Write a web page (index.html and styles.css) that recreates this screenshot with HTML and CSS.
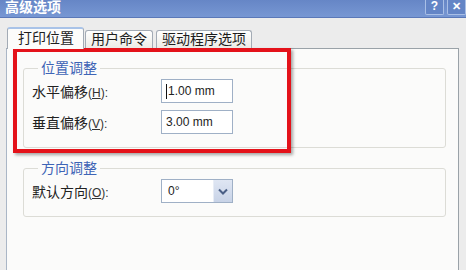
FILE: index.html
```html
<!DOCTYPE html>
<html lang="zh-CN">
<head>
  <meta charset="UTF-8">
  <title>高级选项</title>
  <link rel="stylesheet" href="styles.css">
</head>
<body>
  <div class="dialog">
    <div class="titlebar">
      <span class="title">高级选项</span>
      <div class="caption-btns">
        <span class="cbtn">?</span>
        <span class="cbtn close">✕</span>
      </div>
    </div>

    <div class="client">
      <div class="tabs">
        <div class="tab active">打印位置</div>
        <div class="tab">用户命令</div>
        <div class="tab wide">驱动程序选项</div>
      </div>

      <div class="panel">
        <fieldset class="group">
          <legend>位置调整</legend>
          <div class="row">
            <label>水平偏移<span class="key">(<u>H</u>):</span></label>
            <div class="field"><span class="caret"></span>1.00 mm</div>
          </div>
          <div class="row">
            <label>垂直偏移<span class="key">(<u>V</u>):</span></label>
            <div class="field">3.00 mm</div>
          </div>
        </fieldset>

        <fieldset class="group">
          <legend>方向调整</legend>
          <div class="row">
            <label>默认方向<span class="key">(<u>O</u>):</span></label>
            <div class="field combo">
              <span class="value">0°</span>
              <span class="drop">
                <svg width="10" height="7" viewBox="0 0 10 7"><path d="M1 1.5 L5 5.5 L9 1.5" fill="none" stroke="#4a5f86" stroke-width="2"/></svg>
              </span>
            </div>
          </div>
        </fieldset>
      </div>

      <div class="highlight"></div>
    </div>
  </div>
</body>
</html>
```

FILE: styles.css
```css
* {
  margin: 0;
  padding: 0;
  box-sizing: border-box;
}

body {
  width: 466px;
  height: 270px;
  overflow: hidden;
  background: #ececec;
  font-family: "Liberation Sans", "Noto Sans CJK SC", sans-serif;
  color: #1e1e1e;
}

.titlebar {
  height: 18px;
  display: flex;
  justify-content: space-between;
  background: linear-gradient(#6686c6, #7797d3);
  border-bottom: 1px solid #5a78b8;
}

.title {
  margin: -1px 0 0 5px;
  font-size: 14px;
  line-height: 16px;
  font-weight: bold;
  color: #fff;
}

.caption-btns {
  display: flex;
  gap: 3px;
}

.cbtn {
  width: 19px;
  height: 16px;
  margin-top: -1px;
  border: 1px solid #a9bfe6;
  border-top: none;
  border-radius: 0 0 2px 2px;
  background: #6485c6;
  color: #fff;
  font-size: 12px;
  font-weight: bold;
  line-height: 15px;
  text-align: center;
}

.cbtn.close {
  font-size: 11px;
}

.client {
  position: relative;
  padding: 9px 0 0 6px;
}

.tabs {
  display: flex;
  align-items: flex-end;
  padding-left: 1px;
  gap: 1px;
  position: relative;
  z-index: 1;
}

.tab {
  height: 18px;
  padding: 0 5px;
  border: 1px solid #a3abb5;
  border-bottom: none;
  border-radius: 3px 3px 0 0;
  background: linear-gradient(#ffffff, #ecebe6);
  font-size: 14px;
  line-height: 17px;
  white-space: nowrap;
}

.tab.active {
  height: 22px;
  margin-bottom: -1px;
  padding: 0 9px 0 10px;
  border-top: 2px solid #a9c3e8;
  background: #fcfcfb;
  line-height: 19px;
}

.tab.wide {
  margin-left: 2px;
}

.panel {
  width: 453px;
  height: 222px;
  background: #fbfbfa;
  border: 1px solid #9aa2a8;
  border-bottom: none;
  border-left-color: #aab6c6;
  padding: 11px 12px 0 16px;
}

.group {
  border: 1px solid #dcdcd6;
  border-radius: 3px;
  padding: 3px 10px 13px 8px;
  margin-bottom: 12px;
}

.group legend {
  margin-left: 6px;
  padding: 0 3px;
  font-size: 14px;
  line-height: 16px;
  color: #3e64b6;
}

.row {
  display: grid;
  grid-template-columns: 129px 72px;
  align-items: center;
}

.row + .row {
  margin-top: 7px;
}

.row label {
  font-size: 14px;
  color: #222;
}

.key {
  font-size: 12px;
  color: #333;
}

.field {
  height: 24px;
  border: 1px solid #9fb0c6;
  background: #fff;
  padding-left: 4px;
  font-size: 12px;
  line-height: 22px;
  color: #222;
  display: flex;
  align-items: center;
}

.caret {
  width: 1px;
  height: 15px;
  background: #111;
  margin-right: 1px;
}

.combo {
  justify-content: space-between;
  padding-right: 0;
}

.combo .value {
  padding-left: 2px;
}

.drop {
  width: 19px;
  height: 22px;
  display: flex;
  align-items: center;
  justify-content: center;
  background: linear-gradient(#dfe6f3, #c8d3e7);
  border-left: 1px solid #e8edf6;
}

.highlight {
  position: absolute;
  left: 13px;
  top: 30px;
  width: 278px;
  height: 105px;
  border: 4px solid #e4121a;
  box-shadow: 2px 2px 3px rgba(0, 0, 0, .35);
}
```
